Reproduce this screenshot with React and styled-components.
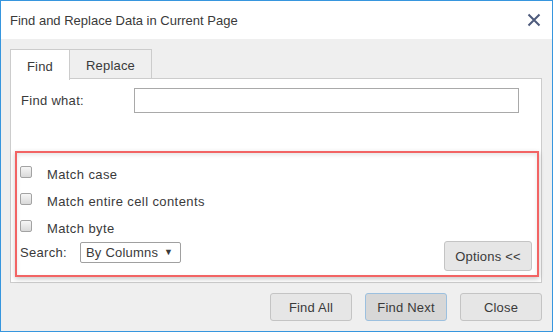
import React from 'react'
import styled, { createGlobalStyle } from 'styled-components'

const GlobalStyle = createGlobalStyle`
  html, body {
    margin: 0;
    padding: 0;
    background: #ffffff;
  }
  body {
    font-family: 'Liberation Sans', Arial, sans-serif;
    font-size: 13px;
    color: #3a3a3a;
  }
`

const Dialog = styled.div`
  box-sizing: border-box;
  width: 553px;
  height: 332px;
  border: 1px solid #3796de;
  background: #efefef;
  display: flex;
  flex-direction: column;
`

const TitleBar = styled.div`
  height: 38px;
  background: #ffffff;
  display: flex;
  align-items: center;
  justify-content: space-between;
  padding: 0 11px 0 9px;
  flex-shrink: 0;
`

const Title = styled.div`
  font-size: 13px;
  color: #3a3a3a;
`

const CloseIcon = styled.svg`
  width: 14px;
  height: 14px;
  display: block;
`

const Body = styled.div`
  padding: 10px 10px 0 9px;
  display: flex;
  flex-direction: column;
`

const TabRow = styled.div`
  display: flex;
  height: 30px;
  position: relative;
  z-index: 1;
`

const Tab = styled.div`
  box-sizing: border-box;
  width: ${p => p.$width}px;
  height: ${p => (p.$active ? 31 : 30)}px;
  border: 1px solid #cccccc;
  border-bottom: ${p => (p.$active ? 'none' : '1px solid #cccccc')};
  border-left: ${p => (p.$first ? '1px solid #cccccc' : 'none')};
  background: ${p => (p.$active ? '#ffffff' : '#efefef')};
  display: flex;
  align-items: center;
  justify-content: center;
  padding-top: 2px;
  font-size: 13px;
  letter-spacing: 0.2px;
  color: #3a3a3a;
`

const Panel = styled.div`
  box-sizing: border-box;
  width: 532px;
  height: 205px;
  background: #ffffff;
  border: 1px solid #cccccc;
  margin-top: -1px;
  padding: 9px 3px 0 4px;
  display: flex;
  flex-direction: column;
`

const FieldRow = styled.div`
  display: flex;
  align-items: center;
  padding-left: 6px;
`

const Label = styled.label`
  width: 113px;
  font-size: 13px;
  letter-spacing: 0.3px;
`

const TextInput = styled.div`
  box-sizing: border-box;
  width: 385px;
  height: 25px;
  border: 1px solid #a9a9a9;
  background: #ffffff;
`

const Options = styled.div`
  box-sizing: border-box;
  margin-top: 38px;
  height: 126px;
  width: 524px;
  border: 2px solid #f26464;
  box-shadow: 0 2px 5px rgba(0, 0, 0, 0.22), inset 0 2px 4px rgba(0, 0, 0, 0.1);
  padding: 8px 0 0 3px;
  display: flex;
  flex-direction: column;
  position: relative;
`

const CheckRow = styled.div`
  display: flex;
  align-items: center;
  height: 26px;
  padding-bottom: 1px;
`

const Box = styled.span`
  box-sizing: border-box;
  width: 12px;
  height: 12px;
  border: 1px solid #a3a3a3;
  border-radius: 2px;
  background: linear-gradient(#f6f6f6, #d9d9d9);
  margin: -5px 15px 0 0;
`

const CheckText = styled.span`
  font-size: 13px;
  letter-spacing: 0.4px;
`

const SearchRow = styled.div`
  display: flex;
  align-items: center;
`

const SearchLabel = styled.span`
  width: 60px;
  font-size: 13px;
  letter-spacing: 0.3px;
`

const Select = styled.div`
  box-sizing: border-box;
  width: 101px;
  height: 21px;
  border: 1px solid #a0a0a0;
  border-radius: 2px;
  display: flex;
  align-items: center;
  padding-left: 5px;
  font-size: 13px;
  letter-spacing: 0.2px;
  gap: 6px;
`

const Arrow = styled.span`
  font-size: 9px;
  margin-top: -2px;
`

const Button = styled.div`
  box-sizing: border-box;
  width: ${p => p.$width}px;
  height: ${p => p.$height || 28}px;
  border: 1px solid ${p => (p.$focus ? '#9cc0df' : '#c4c4c4')};
  border-radius: 3px;
  background: ${p => (p.$focus ? '#d7d7d7' : '#e6e6e6')};
  display: flex;
  align-items: center;
  justify-content: center;
  font-size: 13px;
  letter-spacing: 0.2px;
  color: #3a3a3a;
`

const OptionsButton = styled(Button)`
  position: absolute;
  right: 5px;
  bottom: 4px;
`

const Footer = styled.div`
  display: flex;
  justify-content: flex-end;
  gap: 13px;
  width: 532px;
  margin-top: 10px;
`

const checks = ['Match case', 'Match entire cell contents', 'Match byte']

export default function App() {
  return (
    <>
      <GlobalStyle />
      <Dialog>
        <TitleBar>
          <Title>Find and Replace Data in Current Page</Title>
          <CloseIcon viewBox="0 0 14 14">
            <path d="M1.5 1.5 L12.5 12.5 M12.5 1.5 L1.5 12.5" stroke="#4e5b7c" strokeWidth="2" fill="none" />
          </CloseIcon>
        </TitleBar>
        <Body>
          <TabRow>
            <Tab $width={60} $active $first>Find</Tab>
            <Tab $width={82}>Replace</Tab>
          </TabRow>
          <Panel>
            <FieldRow>
              <Label>Find what:</Label>
              <TextInput />
            </FieldRow>
            <Options>
              {checks.map(text => (
                <CheckRow key={text}>
                  <Box />
                  <CheckText>{text}</CheckText>
                </CheckRow>
              ))}
              <SearchRow>
                <SearchLabel>Search:</SearchLabel>
                <Select>
                  By Columns <Arrow>▼</Arrow>
                </Select>
              </SearchRow>
              <OptionsButton $width={88} $height={30}>Options &lt;&lt;</OptionsButton>
            </Options>
          </Panel>
          <Footer>
            <Button $width={82}>Find All</Button>
            <Button $width={82} $focus>Find Next</Button>
            <Button $width={82}>Close</Button>
          </Footer>
        </Body>
      </Dialog>
    </>
  )
}
